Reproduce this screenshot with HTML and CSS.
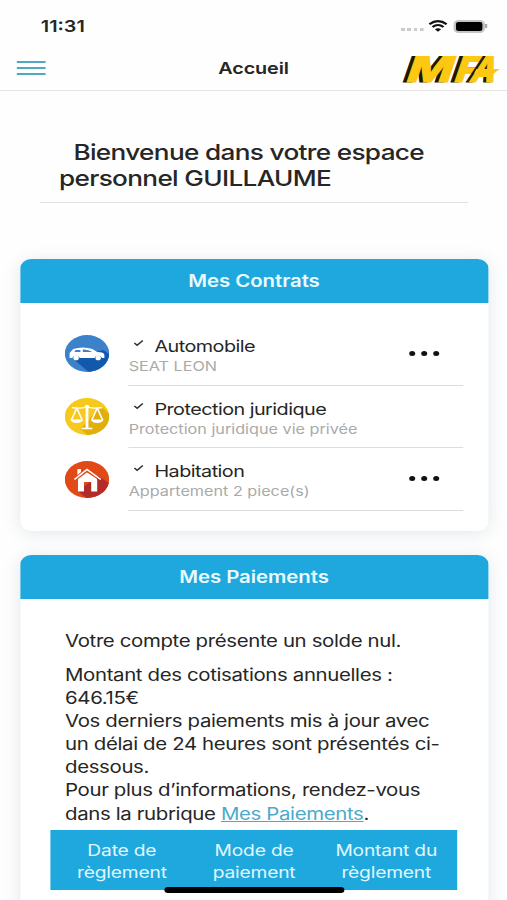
FILE: index.html
```
<!DOCTYPE html>
<html lang="fr">
<head>
    <meta charset="UTF-8">
    <title>Accueil</title>
    <link rel="stylesheet" href="styles.css">
</head>
<body>
<div class="screen">
    <div class="status">
        <span class="time">11:31</span>
        <div class="statusIcons">
            <i class="signal"></i>
            <svg class="wifi" width="16" height="12" viewBox="0 0 16 12">
                <path d="M.8 4.3Q8-2 15.2 4.3M3.4 7Q8 3 12.6 7" fill="none" stroke="#111" stroke-width="2.1"/>
                <path d="M8 11.8L5.4 9.3Q8 7.3 10.6 9.3Z" fill="#111"/>
            </svg>
            <i class="battery"></i>
        </div>
    </div>
    <div class="nav">
        <div class="menu"><i></i><i></i><i></i></div>
        <h1>Accueil</h1>
        <svg class="logo" width="84" height="44" viewBox="0 0 84 44">
            <g class="logoText" transform="translate(0 35.5) skewX(-16)">
                <text class="shade" x="-1" y="0" textLength="38" lengthAdjust="spacingAndGlyphs">M</text>
                <text class="front" x="2" y="0" textLength="38" lengthAdjust="spacingAndGlyphs">M</text>
                <text class="shade" x="39" y="0" textLength="20" lengthAdjust="spacingAndGlyphs">F</text>
                <text class="front" x="42" y="0" textLength="20" lengthAdjust="spacingAndGlyphs">F</text>
                <text class="shade" x="53" y="0" textLength="21" lengthAdjust="spacingAndGlyphs">A</text>
                <text class="front" x="55.5" y="0" textLength="21" lengthAdjust="spacingAndGlyphs">A</text>
            </g>
            <path d="M62 23H81.5L76.5 27.500H60Z" fill="#fcc812"/>
        </svg>
    </div>

    <h2 class="welcome">Bienvenue dans votre espace<br>personnel GUILLAUME</h2>

    <div class="card">
        <div class="cardTitle">Mes Contrats</div>
        <ul class="contracts">
            <li>
                <svg class="icon" width="37" height="37" viewBox="0 0 37 37">
                    <defs><clipPath id="round"><circle cx="18.5" cy="18.5" r="18.5"/></clipPath></defs>
                    <g clip-path="url(#round)">
                        <path d="M0 0H37V37H0Z" fill="#3b82cb"/>
                        <path d="M6 23L20 37H37V19L32 15Z" fill="#1259ab"/>
                    </g>
                    <path d="M4 23L4 18L7 14Q15 11 23 14L27 17Q33 17 33 20V23H31A3.3 3.3 0 0 0 24.7 23H12.5A3.3 3.3 0 0 0 6.2 23Z" fill="#fff"/>
                    <path d="M8 17L9 15H13V17ZM15 17V14.5Q19 14 23 17Z" fill="#3b82cb"/>
                    <circle cx="9.4" cy="23" r="2.3" fill="#fff"/>
                    <circle cx="27.8" cy="23" r="2.3" fill="#fff"/>
                </svg>
                <div class="info">
                    <p class="name"><svg class="check" width="9" height="8" viewBox="0 0 9 8"><path d="M1 4L3.3 6.3L8 1.5"/></svg>Automobile</p>
                    <p class="detail">SEAT LEON</p>
                    <span class="more"><i></i><i></i><i></i></span>
                </div>
            </li>
            <li>
                <svg class="icon" width="37" height="37" viewBox="0 0 37 37">
                    <g clip-path="url(#round)">
                        <path d="M0 0H37V37H0Z" fill="#f6c91c"/>
                        <path d="M13 31L19 37H37V16L30 8Z" fill="#e0ae0d"/>
                    </g>
                    <path d="M6 9.5Q12 11 18.5 9Q25 11 31 9.5M18.5 7V30M14 30.5H23M10 10L5.5 22M10 10L14.5 22M27 10L22.5 22M27 10L31.5 22" fill="none" stroke="#fff" stroke-width="1.3"/>
                    <path d="M17.3 10H19.7V30H17.3ZM4.5 21.5H15.5Q14 25 10 25T4.5 21.5ZM21.5 21.5H32.5Q31 25 27 25T21.5 21.5Z" fill="#fff"/>
                    <circle cx="18.5" cy="8.5" r="1.8" fill="#fff"/>
                </svg>
                <div class="info">
                    <p class="name"><svg class="check" width="9" height="8" viewBox="0 0 9 8"><path d="M1 4L3.3 6.3L8 1.5"/></svg>Protection juridique</p>
                    <p class="detail">Protection juridique vie privée</p>
                </div>
            </li>
            <li>
                <svg class="icon" width="37" height="37" viewBox="0 0 37 37">
                    <g clip-path="url(#round)">
                        <path d="M0 0H37V37H0Z" fill="#e14a17"/>
                        <path d="M11 30L18 37H37V22L28 15Z" fill="#b32b2b"/>
                    </g>
                    <path d="M11 18L18.5 11.5L27 18V30.5H22V21H16V30.5H11Z" fill="#fff"/>
                    <path d="M8 18.5L18.5 8.5L30 18.5" fill="none" stroke="#fff" stroke-width="1.5"/>
                    <path d="M10.5 8H13.5V11L10.5 14Z" fill="#fff"/>
                </svg>
                <div class="info">
                    <p class="name"><svg class="check" width="9" height="8" viewBox="0 0 9 8"><path d="M1 4L3.3 6.3L8 1.5"/></svg>Habitation</p>
                    <p class="detail">Appartement 2 piece(s)</p>
                    <span class="more"><i></i><i></i><i></i></span>
                </div>
            </li>
        </ul>
    </div>

    <div class="card payments">
        <div class="cardTitle">Mes Paiements</div>
        <div class="text">
            <p>Votre compte présente un solde nul.</p>
            <p>Montant des cotisations annuelles :<br>646.15€<br>Vos derniers paiements mis à jour avec<br>un délai de 24 heures sont présentés ci-<br>dessous.<br>Pour plus d’informations, rendez-vous<br>dans la rubrique <a href="#">Mes Paiements</a>.</p>
        </div>
        <div class="tableHead">
            <span>Date de règlement</span>
            <span>Mode de paiement</span>
            <span>Montant du règlement</span>
        </div>
    </div>
    <div class="homeBar"></div>
</div>
</body>
</html>
```

FILE: styles.css
```
*{
    box-sizing: border-box;
    margin: 0;
    padding: 0;
}
body{
    background: #fff;
    overflow: hidden;
}
/* the whole screen is stretched in width */
.screen{
    position: relative;
    width: 422.5px;
    height: 900px;
    overflow: hidden;
    transform: scaleX(1.2);
    transform-origin: 0 0;
    font-family: Inter, "Liberation Sans", sans-serif;
    color: #262626;
    background: #fefefe;
}

.status{
    display: flex;
    justify-content: space-between;
    height: 46px;
    padding: 6px 19px 0 34px;
    align-items: center;
}
.time{
    font-size: 16.5px;
    font-weight: 600;
}
.statusIcons{
    display: flex;
    align-items: center;
}
.signal{
    width: 19px;
    height: 3.5px;
    margin: 7px 4px 0 0;
    background: repeating-linear-gradient(90deg, #ccc 0 3.2px, #fefefe 3.2px 5.3px);
}
.battery{
    position: relative;
    width: 25.5px;
    height: 13px;
    margin-left: 5px;
    border: 2px solid #c4c4c4;
    border-radius: 4px;
    background: #000;
}
.battery:after{
    content: '';
    position: absolute;
    right: -4px;
    top: 2.5px;
    width: 1.5px;
    height: 4px;
    background: #aaa;
}

.nav{
    display: grid;
    grid-template-columns: 74px 1fr 84px;
    align-items: center;
    height: 45px;
    padding: 0 4px 0 14px;
    border-bottom: 1px solid #e4e4e4;
}
.menu i{
    display: block;
    width: 23.5px;
    height: 2px;
    margin: 4px 0;
    background: #4fa8c2;
}
.nav h1{
    font-size: 16.5px;
    font-weight: 600;
    letter-spacing: -.1px;
    text-align: center;
}
.logo{
    overflow: visible;
}
.logoText{
    font-size: 35px;
    font-weight: 800;
}
.shade{
    fill: #1a1608;
    stroke: #1a1608;
}
.front{
    fill: #fcc812;
    stroke: #fcc812;
}

.welcome{
    margin: 48px 33px 0;
    padding: 0 0 10px 16.2px;
    height: 64px;
    border-bottom: 1px solid #e2e2e2;
    font-size: 21.8px;
    font-weight: 500;
    letter-spacing: -.55px;
    line-height: 26px;
    text-indent: 12px;
    white-space: nowrap;
}

.card{
    width: 390px;
    height: 272px;
    margin: 56px 0 0 16.7px;
    border-radius: 9px;
    background: #fff;
    box-shadow: 0 2px 16px rgba(60, 90, 110, .14);
}
.cardTitle{
    height: 44px;
    border-radius: 9px 9px 0 0;
    background: #1fa8dd;
    color: #e9fbff;
    font-size: 17px;
    font-weight: 600;
    letter-spacing: -.05px;
    line-height: 44px;
    text-align: center;
}

.contracts{
    list-style: none;
    padding: 20px 20.5px 0 37px;
}
.contracts li{
    display: flex;
    justify-content: space-between;
    height: 62.7px;
    padding-top: 11.6px;
}
.icon{
    margin-top: .7px;
}
.info{
    position: relative;
    width: 279px;
    height: 51px;
    border-bottom: 1px solid #ddd;
}
.name{
    padding-top: .5px;
    font-size: 16.5px;
    letter-spacing: -.45px;
    line-height: 22px;
}
.check{
    margin: 0 8.5px 0 4px;
    vertical-align: 5px;
    fill: none;
    stroke: #333;
    stroke-width: 1.3;
}
.detail{
    color: #aaa;
    font-size: 13.5px;
    line-height: 18px;
}
.more{
    position: absolute;
    top: 16.5px;
    right: 20px;
    display: flex;
    gap: 5px;
}
.more i{
    width: 5px;
    height: 5px;
    border-radius: 50%;
    background: #111;
}

.payments{
    height: 400px;
    margin-top: 24px;
}
.text{
    padding: 31.4px 0 0 37.5px;
    font-size: 17px;
    letter-spacing: -.3px;
    line-height: 23.1px;
    white-space: nowrap;
}
.text p + p{
    margin-top: 10.5px;
}
.text a{
    color: #4da9cc;
}
.tableHead{
    display: grid;
    grid-template-columns: 1fr 1fr 1fr;
    width: 338.5px;
    height: 60px;
    margin: 4.8px 0 0 25.8px;
    padding: 9px 4px;
    background: #1fa8dd;
    color: #e0f7ff;
    font-size: 16px;
    letter-spacing: -.15px;
    line-height: 22px;
    text-align: center;
}
.tableHead span{
    padding: 0 10px;
}
.homeBar{
    position: absolute;
    left: 136.5px;
    top: 887px;
    width: 150px;
    height: 5.5px;
    border-radius: 3px;
    background: #000;
}
```
